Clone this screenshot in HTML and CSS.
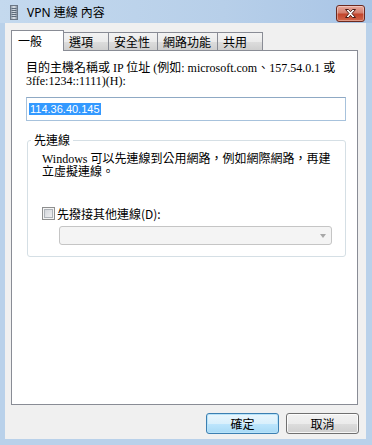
FILE: index.html
```html
<!DOCTYPE html>
<html lang="zh-Hant">

<head>
    <meta charset="UTF-8">
    <title>VPN 連線 內容</title>
    <link rel="stylesheet" href="styles.css">
</head>

<body>
    <div class="window">
        <div class="titlebar">
            <svg class="app-icon" width="8" height="15" viewBox="0 0 8 15">
                <defs>
                    <linearGradient id="tower" x1="0" y1="0" x2="1" y2="0">
                        <stop offset="0" stop-color="#8d9aa8"/>
                        <stop offset="0.5" stop-color="#dfe5eb"/>
                        <stop offset="1" stop-color="#7c8896"/>
                    </linearGradient>
                </defs>
                <rect x="0.5" y="0.5" width="7" height="14" fill="url(#tower)" stroke="#6b7785"/>
                <path d="M1.5 3.5h5M1.5 5.5h5M1.5 7.5h5M1.5 9.5h5M1.5 11.5h5" stroke="#5d6b7a" stroke-width="1"/>
            </svg>
            <span class="title">VPN 連線 內容</span>
            <div class="close">
                <svg width="29" height="17" viewBox="0 0 29 17">
                    <path d="M9.5 4.5h3l2 2.2 2-2.2h3l-3.5 4 3.5 4h-3l-2-2.2-2 2.2h-3l3.5-4z" fill="#fff" stroke="#4a1c14" stroke-width="1" stroke-linejoin="round"/>
                </svg>
            </div>
        </div>

        <div class="client">
            <div class="tabs">
                <div class="tab tab-active w53">一般</div>
                <div class="tab w46">選項</div>
                <div class="tab w50">安全性</div>
                <div class="tab w61">網路功能</div>
                <div class="tab w46">共用</div>
            </div>

            <div class="panel">
                <p class="host-label">目的主機名稱或 IP 位址 (例如: microsoft.com、157.54.0.1 或<br>3ffe:1234::1111)(H):</p>
                <div class="textbox"><span class="selection">114.36.40.145</span></div>

                <fieldset class="group">
                    <legend>先連線</legend>
                    <div class="group-body">
                        <p class="note">Windows 可以先連線到公用網路，例如網際網路，再建<br>立虛擬連線。</p>
                        <label class="check"><span class="check-box"></span>先撥接其他連線(D):</label>
                        <div class="combo"><span class="combo-arrow"></span></div>
                    </div>
                </fieldset>
            </div>

            <div class="buttons">
                <button class="btn btn-default">確定</button>
                <button class="btn">取消</button>
            </div>
        </div>
    </div>
</body>

</html>
```

FILE: styles.css
```css
* {
    padding: 0;
    margin: 0;
    box-sizing: border-box;
}

html,
body {
    width: 372px;
    height: 445px;
    overflow: hidden;
}

body {
    background: #b9d1ea;
    font-family: "Liberation Serif", "Noto Sans CJK TC", serif;
    font-size: 12px;
    color: #000;
}

.window {
    height: 100%;
    display: flex;
    flex-direction: column;
}

/* title bar */
.titlebar {
    height: 23px;
    display: flex;
    align-items: flex-start;
    padding: 0 7px 0 10px;
    background: linear-gradient(to right, #c4d9ee, #b7cfe9 60%, #a9c5e6);
}

.app-icon {
    margin-top: 5px;
    margin-right: 9px;
}

.title {
    font-family: "Noto Sans", "Noto Sans CJK TC", sans-serif;
    font-size: 12px;
    line-height: 14px;
    margin-top: 6px;
    color: #000;
}

.close {
    margin-left: auto;
    margin-top: 5px;
    width: 29px;
    height: 17px;
    border: 1px solid #6b2a20;
    border-radius: 3px;
    background: linear-gradient(#e9a99c, #d47f6e 45%, #c2452c 55%, #d3674b);
    box-shadow: inset 0 0 0 1px rgba(255, 255, 255, 0.35);
    display: flex;
}

.close svg {
    margin: -1px;
}

/* client area */
.client {
    flex: 1;
    margin: 0 6px 6px 5px;
    padding: 7px 8px 5px 6px;
    background: #f0f0f0;
    display: flex;
    flex-direction: column;
}

.tabs {
    height: 20px;
    display: flex;
    align-items: flex-end;
    position: relative;
    z-index: 1;
}

.tab {
    height: 18px;
    margin-left: -1px;
    padding-left: 5px;
    line-height: 17px;
    font-family: "Noto Sans CJK TC", sans-serif;
    border: 1px solid #898c95;
    border-bottom: none;
    background: linear-gradient(#f3f3f3, #ebebeb 50%, #dddddd 51%, #cfcfcf);
}

.tab-active {
    height: 21px;
    margin-left: 0;
    margin-bottom: -1px;
    padding-left: 6px;
    line-height: 19px;
    background: #fff;
}

.w53 { width: 53px; }
.w46 { width: 46px; }
.w50 { width: 50px; }
.w61 { width: 61px; }

.panel {
    flex: 1;
    background: #fff;
    border: 1px solid #898c95;
    padding: 11px 11px 0 14px;
}

.host-label {
    line-height: 13px;
}

.textbox {
    height: 24px;
    margin-top: 9px;
    padding: 4px 2px;
    border: 1px solid #a7c2dc;
    border-top-color: #8fa9c4;
    background: #fff;
}

.selection {
    display: inline-block;
    height: 12px;
    line-height: 12px;
    padding: 0 1px;
    font-family: "Liberation Sans", sans-serif;
    font-size: 11px;
    background: #3399ff;
    color: #fff;
}

.group {
    margin: 13px 0 0 1px;
    border: 1px solid #d5dfe5;
    border-radius: 3px;
    min-width: 0;
}

.group legend {
    margin-left: 3px;
    padding: 0 3px;
    line-height: 12px;
    font-family: "Noto Sans CJK TC", sans-serif;
}

.group-body {
    padding: 7px 13px 11px 14px;
}

.note {
    line-height: 13px;
}

.check {
    margin-top: 28px;
    height: 13px;
    line-height: 13px;
    display: flex;
    align-items: center;
    gap: 2px;
    font-family: "Noto Sans CJK TC", sans-serif;
}

.check-box {
    width: 13px;
    height: 13px;
    border: 1px solid #8e8f8f;
    background: linear-gradient(135deg, #cbcfd5, #f6f6f6);
    box-shadow: inset 0 0 0 1px #f4f4f4, inset 0 0 0 2px #aeb3b9;
}

.combo {
    margin: 6px 0 0 17px;
    height: 19px;
    border: 1px solid #c5c5c5;
    border-radius: 3px;
    background: #f4f4f4;
    display: flex;
    justify-content: flex-end;
    align-items: center;
    padding-right: 5px;
}

.combo-arrow {
    width: 0;
    height: 0;
    border-left: 3.5px solid transparent;
    border-right: 3.5px solid transparent;
    border-top: 4px solid #a7a7a7;
    margin-top: 1px;
}

/* dialog buttons */
.buttons {
    margin-top: 8px;
    margin-right: -1px;
    display: flex;
    justify-content: flex-end;
    gap: 7px;
}

.btn {
    width: 73px;
    height: 21px;
    font-family: "Noto Sans CJK TC", sans-serif;
    font-size: 12px;
    line-height: 17px;
    color: #000;
    border: 1px solid #707070;
    border-radius: 3px;
    background: linear-gradient(#f2f2f2, #ebebeb 50%, #dddddd 51%, #cfcfcf);
    box-shadow: inset 0 0 0 1px rgba(255, 255, 255, 0.8);
}

.btn-default {
    border-color: #3c7fb1;
    background: linear-gradient(#eaf6fd, #d9f0fc 50%, #bee6fd 51%, #a7d9f5);
    box-shadow: inset 0 0 0 1px #b8e3f9;
}
```
